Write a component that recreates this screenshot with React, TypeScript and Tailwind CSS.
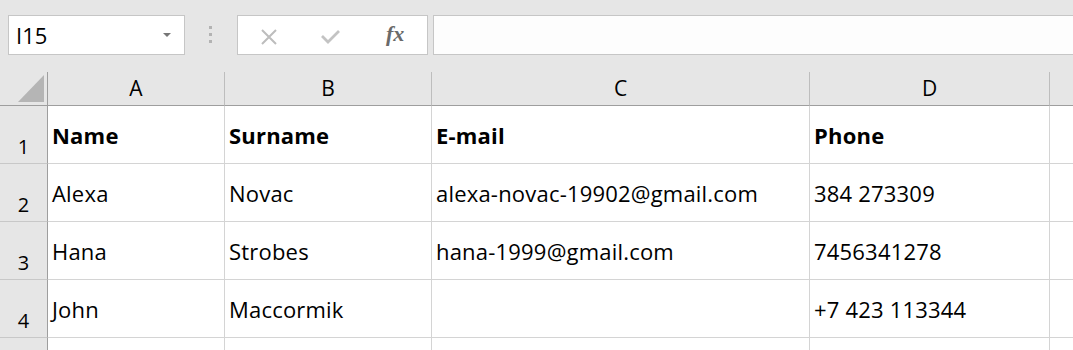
import React from 'react';

const cols = [
  { label: 'A', w: 'w-[177px]' },
  { label: 'B', w: 'w-[207px]' },
  { label: 'C', w: 'w-[378px]' },
  { label: 'D', w: 'w-[240px]' },
  { label: '', w: 'w-[240px]' },
];

const rows: string[][] = [
  ['Name', 'Surname', 'E-mail', 'Phone', ''],
  ['Alexa', 'Novac', 'alexa-novac-19902@gmail.com', '384 273309', ''],
  ['Hana', 'Strobes', 'hana-1999@gmail.com', '7456341278', ''],
  ['John', 'Maccormik', '', '+7 423 113344', ''],
  ['', '', '', '', ''],
];

const font = { fontFamily: '"Open Sans", "Noto Sans", sans-serif' };

const App: React.FC = () => {
  return (
    <div className="w-[1073px] h-[350px] overflow-hidden bg-[#e6e6e6] text-black" style={font}>
      {/* barra della formula */}
      <div className="h-[72px] flex items-start pt-[15px] pl-[8px]">
        <div className="w-[177px] h-[40px] shrink-0 border border-[#c6c6c6] bg-white flex items-center justify-between pl-[7px] pr-[13px]">
          <span className="text-[22px] leading-none">I15</span>
          <span className="w-0 h-0 border-l-[4px] border-r-[4px] border-t-[4px] border-l-transparent border-r-transparent border-t-[#767676]" />
        </div>
        <div className="ml-[24px] mt-[11px] flex flex-col gap-[4px] shrink-0">
          <span className="w-[3px] h-[3px] bg-[#b3b3b3]" />
          <span className="w-[3px] h-[3px] bg-[#b3b3b3]" />
          <span className="w-[3px] h-[3px] bg-[#b3b3b3]" />
        </div>
        <div className="ml-[25px] w-[191px] h-[40px] shrink-0 border border-[#c6c6c6] bg-white relative">
          <svg className="absolute left-[22px] top-[12px]" width="18" height="18" viewBox="0 0 18 18">
            <path d="M2 2 L16 16 M16 2 L2 16" stroke="#bdbdbd" strokeWidth="2" fill="none" />
          </svg>
          <svg className="absolute left-[83px] top-[14px]" width="20" height="14" viewBox="0 0 20 14">
            <path d="M1 6 L7 12 L18 1" stroke="#c3c3c3" strokeWidth="2.8" fill="none" />
          </svg>
          <span
            className="absolute left-[148px] top-[7px] text-[22px] leading-none italic font-bold text-[#6a6a6a]"
            style={{ fontFamily: '"Liberation Serif", "DejaVu Serif", serif' }}
          >
            fx
          </span>
        </div>
        <div className="ml-[5px] flex-1 h-[40px] border border-r-0 border-[#c6c6c6] bg-[#fdfdfd]" />
      </div>

      {/* intestazione colonne */}
      <div className="flex h-[34px]">
        <div className="w-[48px] shrink-0 border-r border-b border-r-[#9e9e9e] border-b-[#9e9e9e] relative">
          <svg className="absolute left-[18px] top-[3px]" width="27" height="28" viewBox="0 0 27 28">
            <polygon points="26,0 26,27 0,27" fill="#b5b5b5" />
          </svg>
        </div>
        {cols.map((c, i) => (
          <div
            key={i}
            className={`${c.w} shrink-0 border-r border-b border-r-[#bdbdbd] border-b-[#9e9e9e] text-center text-[21px] leading-none pt-[6px]`}
          >
            {c.label}
          </div>
        ))}
      </div>

      {/* righe */}
      {rows.map((r, ri) => (
        <div key={ri} className="flex h-[58px]">
          <div className="w-[48px] shrink-0 border-r border-b border-r-[#9e9e9e] border-b-[#c8c8c8] text-center text-[20px] leading-none pt-[31px]">
            {ri < 4 ? ri + 1 : ''}
          </div>
          {r.map((cell, ci) => (
            <div
              key={ci}
              className={`${cols[ci].w} shrink-0 bg-white border-r border-b border-[#d4d4d4] pl-[4px] pt-[18px] text-[22px] leading-none whitespace-nowrap tracking-[0.2px] ${ri === 0 ? 'font-bold' : ''}`}
            >
              {cell}
            </div>
          ))}
        </div>
      ))}
    </div>
  );
};

export default App;
